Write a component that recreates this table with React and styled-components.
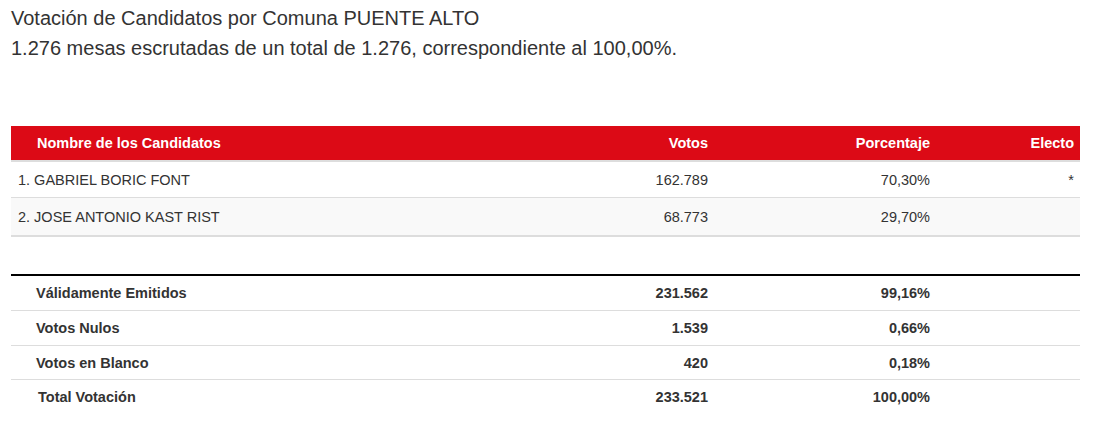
import React from 'react';
import styled, { createGlobalStyle } from 'styled-components';

const GlobalStyle = createGlobalStyle`
  body {
    margin: 0;
    background: #fff;
    font-family: "Liberation Sans", Arial, sans-serif;
    color: #333;
  }
`;

const Page = styled.div`
  padding: 3px 23px 16px 11px;
`;

const Title = styled.div`
  font-size: 20px;
  line-height: 30px;
  color: #333;
`;

const Table = styled.div`
  display: flex;
  flex-direction: column;
  font-size: 14.5px;
  margin-top: ${({ top }) => top}px;
  ${({ topRule }) => topRule && 'border-top: 2px solid #000;'}
`;

const cols = '1fr 200px 222px 142px';

const HeadRow = styled.div`
  display: grid;
  grid-template-columns: ${cols};
  align-items: center;
  height: 34px;
  background: #dc0a16;
  border-bottom: 2px solid #ddd;
`;

const Th = styled.div`
  color: #fff;
  font-weight: bold;
  text-align: ${({ align }) => align || 'right'};
  padding: 0 ${({ pr }) => (pr !== undefined ? pr : 8)}px 0 ${({ pl }) => pl || 0}px;
`;

const Row = styled.div`
  display: grid;
  grid-template-columns: ${cols};
  align-items: center;
  height: ${({ h }) => h}px;
  background: ${({ striped }) => (striped ? '#f9f9f9' : '#fff')};
  border-bottom: ${({ rule }) => rule}px solid #ddd;
`;

const Td = styled.div`
  text-align: ${({ align }) => align || 'right'};
  padding: 0 ${({ pr }) => (pr !== undefined ? pr : 8)}px 0 ${({ pl }) => pl || 0}px;
  font-weight: ${({ bold }) => (bold ? 'bold' : 'normal')};
  color: #333;
`;

const candidates = [
  { name: '1. GABRIEL BORIC FONT', votes: '162.789', pct: '70,30%', elected: '*' },
  { name: '2. JOSE ANTONIO KAST RIST', votes: '68.773', pct: '29,70%', elected: '' },
];

const totals = [
  { label: 'Válidamente Emitidos', votes: '231.562', pct: '99,16%' },
  { label: 'Votos Nulos', votes: '1.539', pct: '0,66%' },
  { label: 'Votos en Blanco', votes: '420', pct: '0,18%' },
  { label: 'Total Votación', votes: '233.521', pct: '100,00%', pl: 27 },
];

const App = () => (
  <Page>
    <GlobalStyle />
    <Title>Votación de Candidatos por Comuna PUENTE ALTO</Title>
    <Title>1.276 mesas escrutadas de un total de 1.276, correspondiente al 100,00%.</Title>

    <Table top={63}>
      <HeadRow>
        <Th align="left" pl={26}>Nombre de los Candidatos</Th>
        <Th>Votos</Th>
        <Th>Porcentaje</Th>
        <Th pr={6}>Electo</Th>
      </HeadRow>
      {candidates.map((c, i) => (
        <Row key={c.name} h={i === 0 ? 35 : 37} rule={i === 0 ? 1 : 2} striped={i % 2 === 1}>
          <Td align="left" pl={7}>{c.name}</Td>
          <Td>{c.votes}</Td>
          <Td>{c.pct}</Td>
          <Td pr={6}>{c.elected}</Td>
        </Row>
      ))}
    </Table>

    <Table top={37} topRule>
      {totals.map((t, i) => (
        <Row key={t.label} h={i === 2 ? 33 : 34} rule={i === totals.length - 1 ? 0 : 1}>
          <Td align="left" pl={t.pl || 25} bold>{t.label}</Td>
          <Td bold>{t.votes}</Td>
          <Td bold>{t.pct}</Td>
          <Td pr={6} />
        </Row>
      ))}
    </Table>
  </Page>
);

export default App;
